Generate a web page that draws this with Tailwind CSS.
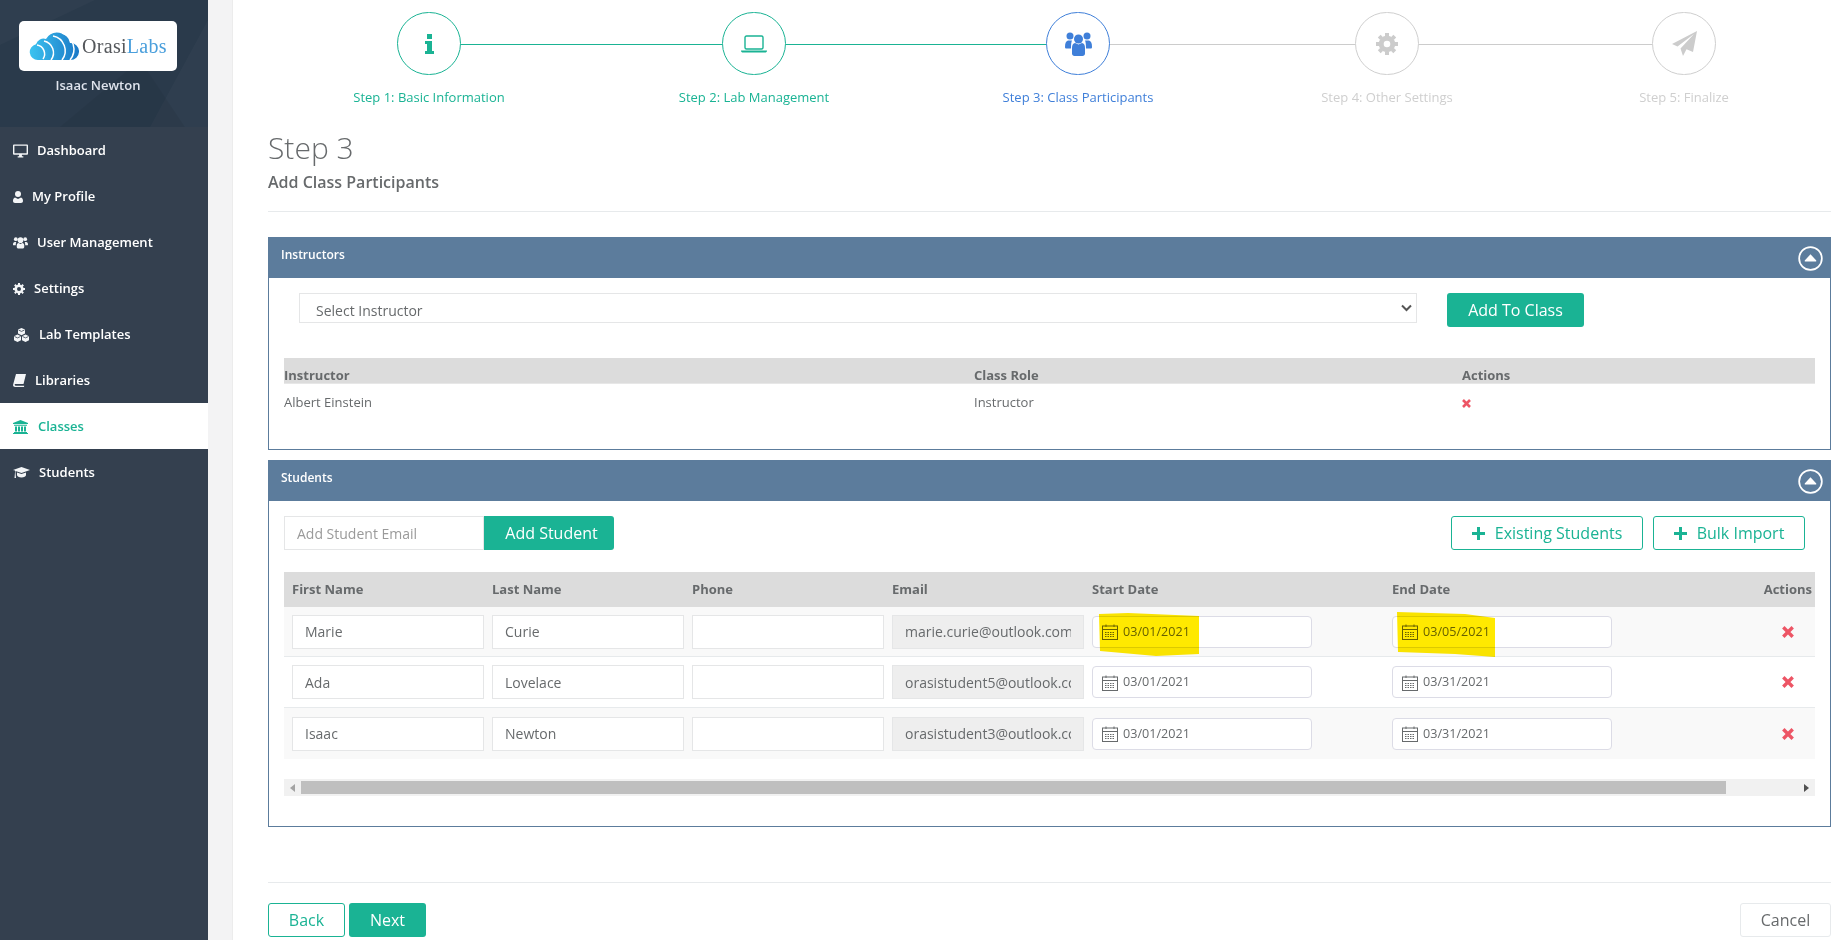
<!DOCTYPE html>
<html lang="en">
<head>
    <meta charset="UTF-8">
    <title>Add Class Participants</title>
    <script src="https://cdn.jsdelivr.net/npm/@tailwindcss/browser@4"></script>
</head>
<body class="bg-white font-['Open_Sans',sans-serif] text-[13px] text-[#676a6c]">
<div class="flex h-[940px] w-[1831px] overflow-hidden">

    <!-- Sidebar -->
    <aside class="w-[208px] shrink-0 bg-[#34404f] text-white">
        <div class="relative h-[127px] overflow-hidden bg-[#2a3a4b] pt-[21px]">
            <svg class="absolute inset-0 h-[127px] w-[208px]" viewBox="0 0 208 127"><path fill="#fff" fill-opacity=".025" d="M0 0h95L0 45zM208 20 150 127h58z"/><path fill="#000" fill-opacity=".05" d="M60 127 140 60l45 67z"/></svg>
            <div class="relative ml-[19px] flex h-[50px] w-[158px] items-center rounded-[5px] bg-white pl-[10px]">
                <svg class="h-[30px] w-[50px] shrink-0" viewBox="0 0 50 30">
                    <defs><linearGradient id="cloud" x1="0" x2="1" y1="0" y2="0"><stop offset="0" stop-color="#3cc3f0"/><stop offset="1" stop-color="#1a78c6"/></linearGradient></defs>
                    <path fill="url(#cloud)" d="M9 29a8 8 0 0 1-2-15.800A8 8 0 0 1 17 8a13 13 0 0 1 24 4 8.500 8.500 0 0 1 9 9 8.500 8.500 0 0 1-8.500 8z"/>
                    <path fill="none" stroke="#fff" stroke-width="1.500" d="M8 14a9 9 0 0 1 6 14M15 10a12 12 0 0 1 7 19M24 5a15 15 0 0 1 9 24M33 2a17 17 0 0 1 8 27"/>
                </svg>
                <span class="ml-[3px] font-['Liberation_Serif',serif] text-[20px] leading-none tracking-[0.3px]"><span class="text-[#55585c]">Orasi</span><span class="text-[#4a9fdc]">Labs</span></span>
            </div>
            <div class="relative mt-[5px] w-[196px] text-center text-[13px] leading-[18px] font-semibold text-[#dfe4ed]">Isaac Newton</div>
        </div>
        <nav class="text-[13px] font-semibold">
            <a class="flex h-[46px] items-center pt-[1px] pl-[13px]">
                <svg class="mr-[9px] h-[14px] w-[15px]" viewBox="0 0 16 14" fill="#f3f5f7"><path d="M1 0h14a1 1 0 0 1 1 1v9a1 1 0 0 1-1 1H9.500v1.500H11V14H5v-1.500h1.500V11H1a1 1 0 0 1-1-1V1a1 1 0 0 1 1-1zm.5 1.500v8h13v-8z"/></svg>Dashboard</a>
            <a class="flex h-[46px] items-center pt-[1px] pl-[13px]">
                <svg class="mr-[9px] h-[12px] w-[10px]" viewBox="0 0 10 12" fill="#f3f5f7"><circle cx="5" cy="3" r="3"/><path d="M2 6.500 5 8l3-1.500c1.300.3 2 1.700 2 3.500 0 1.300-.8 2-2 2H2c-1.200 0-2-.7-2-2 0-1.800.7-3.200 2-3.500z"/></svg>My Profile</a>
            <a class="flex h-[46px] items-center pt-[1px] pl-[13px]">
                <svg class="mr-[9px] h-[13px] w-[15px]" viewBox="0 0 16 13" fill="#f3f5f7"><circle cx="3" cy="3" r="2"/><circle cx="13" cy="3" r="2"/><circle cx="8" cy="4" r="3"/><path d="M0 9c0-2 .6-3 2-3h1.500C3 7 3 8 3 9.500H1C.4 9.500 0 9.500 0 9zM16 9c0-2-.6-3-2-3h-1.500c.5 1 .5 2 .5 3.500h2c.6 0 1-.000 1-.500zM4 9.500C4 8 4.800 7 6 7l2 1 2-1c1.200 0 2 1 2 2.500V11c0 1-.7 2-2 2H6c-1.300 0-2-1-2-2z"/></svg>User Management</a>
            <a class="flex h-[46px] items-center pt-[1px] pl-[13px]">
                <svg class="mr-[9px] h-[12px] w-[12px]" viewBox="0 0 12 12"><circle cx="6" cy="6" r="3.300" fill="none" stroke="#f3f5f7" stroke-width="2.600"/><path stroke="#f3f5f7" stroke-width="2" d="M6 0v12M0 6h12M1.800 1.800l8.400 8.400M10.200 1.800l-8.400 8.400" stroke-dasharray="2 8"/></svg>Settings</a>
            <a class="flex h-[46px] items-center pt-[1px] pl-[13px]">
                <svg class="mr-[9px] h-[14px] w-[17px]" viewBox="0 0 17 14"><g fill="#f3f5f7"><path d="M8.500 0 12 1.600v4L8.500 7.200 5 5.600v-4zM4.500 6.600 8 8.200v4L4.500 14 1 12.200v-4zM12.500 6.600 16 8.200v4L12.500 14 9 12.200v-4z"/></g><path fill="none" stroke="#34404f" stroke-width=".8" d="M5.500 2l3 1.400 3-1.400M1.500 8.500l3 1.400 3-1.400M9.500 8.500l3 1.400 3-1.400"/></svg>Lab Templates</a>
            <a class="flex h-[46px] items-center pt-[1px] pl-[13px]">
                <svg class="mr-[9px] h-[13px] w-[13px]" viewBox="0 0 13 13" fill="#f3f5f7"><path d="M3 0h10L10.500 10H2.500C1.800 10 1.500 10.500 1.700 11s.5.700 1 .700h8.500L11 13H2C1 13 0 12 0 11z"/></svg>Libraries</a>
            <a class="flex h-[46px] items-center bg-white pt-[1px] pl-[13px] text-[#1ab394]">
                <svg class="mr-[10px] h-[14px] w-[15px]" viewBox="0 0 15 14" fill="#1ab394"><path d="M7.500 0 15 3v1H0V3zM1 4.800h13v1H1zM2 6.500h2v5H2zM5 6.500h2v5H5zM8 6.500h2v5H8zM11 6.500h2v5h-2zM1 12h13v1H1zM0 13h15v1H0z"/></svg>Classes</a>
            <a class="flex h-[46px] items-center pt-[1px] pl-[13px]">
                <svg class="mr-[9px] h-[12px] w-[17px]" viewBox="0 0 17 12" fill="#f3f5f7"><path d="M8.500 0 17 3 8.500 6 2.500 3.900V5.500l.5 5.500H1.500L2 5.500V3.500L0 3z"/><path d="M4 5.500 8.500 7 13 5.500V8c0 1.500-2 2.500-4.500 2.500S4 9.500 4 8z"/></svg>Students</a>
        </nav>
    </aside>

    <!-- Gutter -->
    <div class="w-[25px] shrink-0 border-r border-[#ececec] bg-[#f3f3f4]"></div>

    <!-- Main -->
    <main class="min-w-0 flex-1">
        <!-- Steps -->
        <div class="flex h-[113px] items-start pl-[164px] pt-[12px]">
            <div class="flex w-[64px] shrink-0 flex-col items-center text-[#1ab394]">
                <div class="flex h-[63px] w-[64px] items-center justify-center rounded-full border border-[#1ab394]">
                    <svg class="h-[20px] w-[9px]" viewBox="0 0 9 20" fill="#1ab394"><rect x="2" width="5" height="5"/><path d="M0 7h7v10h2v3H0v-3h2v-7H0z"/></svg>
                </div>
                <span class="mt-[13px] text-[13px] leading-[18px] whitespace-nowrap">Step 1: Basic Information</span>
            </div>
            <div class="mt-[32px] h-[1px] w-[261px] shrink-0 bg-[#1ab394]"></div>
            <div class="flex w-[64px] shrink-0 flex-col items-center text-[#1ab394]">
                <div class="flex h-[63px] w-[64px] items-center justify-center rounded-full border border-[#1ab394]">
                    <svg class="h-[18px] w-[26px]" viewBox="0 0 26 18"><rect x="4" y="1" width="18" height="13" rx="1.500" fill="none" stroke="#1ab394" stroke-width="1.400"/><path fill="#1ab394" d="M0 15.500h26c0 1.500-.8 2-2 2H2c-1.200 0-2-.5-2-2z"/></svg>
                </div>
                <span class="mt-[13px] text-[13px] leading-[18px] whitespace-nowrap">Step 2: Lab Management</span>
            </div>
            <div class="mt-[32px] h-[1px] w-[260px] shrink-0 bg-[#1ab394]"></div>
            <div class="flex w-[64px] shrink-0 flex-col items-center text-[#3f7fd9]">
                <div class="flex h-[63px] w-[64px] items-center justify-center rounded-full border border-[#3f7fd9]">
                    <svg class="h-[24px] w-[27px]" viewBox="0 0 27 24" fill="#3f7fd9"><circle cx="5" cy="4" r="3.500"/><circle cx="22" cy="4" r="3.500"/><circle cx="13.500" cy="7" r="4.500"/><path d="M0 15c0-4 1-6 3-6.500h4c-.7 1.500-1 3.500-1 8H1.500C.5 16.500 0 16 0 15zM27 15c0-4-1-6-3-6.500h-4c.7 1.500 1 3.500 1 8h4.500c1 0 1.500-.5 1.500-1.500zM7 16c0-3 1-4.500 3-5l3.500 1.500L17 11c2 .5 3 2 3 5v5.500c0 1.500-1 2.500-2.500 2.500h-8C8 24 7 23 7 21.500z"/></svg>
                </div>
                <span class="mt-[13px] text-[13px] leading-[18px] whitespace-nowrap">Step 3: Class Participants</span>
            </div>
            <div class="mt-[32px] h-[1px] w-[245px] shrink-0 bg-[#cccccc]"></div>
            <div class="flex w-[64px] shrink-0 flex-col items-center text-[#cfcfcf]">
                <div class="flex h-[63px] w-[64px] items-center justify-center rounded-full border border-[#cfcfcf]">
                    <svg class="h-[22px] w-[22px]" viewBox="0 0 22 22"><circle cx="11" cy="11" r="5.800" fill="none" stroke="#cccccc" stroke-width="5"/><path stroke="#cccccc" stroke-width="4" d="M11 0v22M0 11h22M3.200 3.200l15.600 15.600M18.800 3.200 3.200 18.800" stroke-dasharray="3.500 15"/></svg>
                </div>
                <span class="mt-[13px] text-[13px] leading-[18px] whitespace-nowrap">Step 4: Other Settings</span>
            </div>
            <div class="mt-[32px] h-[1px] w-[233px] shrink-0 bg-[#cccccc]"></div>
            <div class="flex w-[64px] shrink-0 flex-col items-center text-[#cfcfcf]">
                <div class="flex h-[63px] w-[64px] items-center justify-center rounded-full border border-[#cfcfcf]">
                    <svg class="h-[25px] w-[25px]" viewBox="0 0 25 25" fill="#cccccc"><path d="M25 0 21 21l-6.500-2.700L11 25l-2.500-7.500L22 3 5.500 15.500 0 13z"/></svg>
                </div>
                <span class="mt-[13px] text-[13px] leading-[18px] whitespace-nowrap">Step 5: Finalize</span>
            </div>
        </div>

        <!-- Title -->
        <div class="ml-[35px] h-[99px] border-b border-[#e7eaec] pt-[17px]">
            <h2 class="text-[30px] leading-[36px] font-light text-[#676a6c]">Step 3</h2>
            <h3 class="mt-[6px] text-[16px] leading-[20px] font-semibold text-[#676a6c]">Add Class Participants</h3>
        </div>

        <!-- Instructors panel -->
        <section class="mt-[25px] ml-[35px] h-[213px] border border-[#5c7c9c]">
            <div class="flex h-[40px] items-center justify-between bg-[#5c7c9c] pr-[7px] pl-[12px] text-[12px] font-semibold text-white">
                <span class="pb-[7px]">Instructors</span>
                <svg class="h-[25px] w-[25px]" viewBox="0 0 26 26"><circle cx="13" cy="13" r="11.800" fill="none" stroke="#fff" stroke-width="1.800"/><path fill="#fff" d="M13 8.500 19 15a.700.700 0 0 1-.500 1h-11a.700.700 0 0 1-.500-1z"/></svg>
            </div>
            <div class="flex items-start pt-[15px] pl-[30px]">
                <select class="h-[30px] w-[1118px] appearance-none border border-[#e5e6e7] pt-[4px] pl-[16px] text-[14px] text-[#676a6c]"><option>Select Instructor</option></select>
                <svg class="mt-[11px] -ml-[16px] h-[8px] w-[11px]" viewBox="0 0 11 8"><path fill="none" stroke="#555" stroke-width="2" d="m1 1.500 4.500 4.500L10 1.500"/></svg>
                <button class="ml-[35px] h-[34px] w-[137px] rounded-[3px] bg-[#1ab394] text-[16px] text-white">Add To Class</button>
            </div>
            <div class="mt-[31px] mr-[15px] ml-[15px]">
                <div class="flex h-[26px] items-end border-b border-[#e7e7e7] bg-[#dcdcdc] text-[13px] leading-[16px] font-bold">
                    <span class="w-[690px]">Instructor</span><span class="w-[488px]">Class Role</span><span>Actions</span>
                </div>
                <div class="flex h-[36px] items-center pt-[2px] text-[13px]">
                    <span class="w-[690px]">Albert Einstein</span><span class="w-[488px]">Instructor</span>
                    <svg class="h-[9px] w-[9px]" viewBox="0 0 9 9"><path stroke="#ed5565" stroke-width="2.600" d="m1 1 7 7M8 1 1 8"/></svg>
                </div>
            </div>
        </section>

        <!-- Students panel -->
        <section class="mt-[10px] ml-[35px] h-[367px] border border-[#5c7c9c]">
            <div class="flex h-[40px] items-center justify-between bg-[#5c7c9c] pr-[7px] pl-[12px] text-[12px] font-semibold text-white">
                <span class="pb-[7px]">Students</span>
                <svg class="h-[25px] w-[25px]" viewBox="0 0 26 26"><circle cx="13" cy="13" r="11.800" fill="none" stroke="#fff" stroke-width="1.800"/><path fill="#fff" d="M13 8.500 19 15a.700.700 0 0 1-.500 1h-11a.700.700 0 0 1-.500-1z"/></svg>
            </div>
            <div class="flex items-center pt-[15px] pr-[25px] pl-[15px]">
                <input class="h-[34px] w-[200px] border border-[#e5e6e7] px-[12px] text-[14px] placeholder:text-[#9a9a9a]" placeholder="Add Student Email">
                <button class="h-[34px] w-[130px] rounded-r-[3px] bg-[#1ab394] pl-[5px] text-[16px] text-white">Add Student</button>
                <button class="ml-auto flex h-[34px] w-[192px] items-center justify-center rounded-[3px] border border-[#1ab394] text-[16px] text-[#1ab394]">
                    <svg class="mr-[10px] h-[13px] w-[13px]" viewBox="0 0 13 13" fill="#1ab394"><path d="M5 0h3v5h5v3H8v5H5V8H0V5h5z"/></svg>Existing Students</button>
                <button class="ml-[10px] flex h-[34px] w-[152px] items-center justify-center rounded-[3px] border border-[#1ab394] text-[16px] text-[#1ab394]">
                    <svg class="mr-[10px] h-[13px] w-[13px]" viewBox="0 0 13 13" fill="#1ab394"><path d="M5 0h3v5h5v3H8v5H5V8H0V5h5z"/></svg>Bulk Import</button>
            </div>
            <div class="mt-[22px] mr-[15px] ml-[15px]">
                <div class="flex h-[35px] items-center bg-[#dcdcdc] pl-[8px] text-[13px] font-bold">
                    <span class="w-[200px]">First Name</span><span class="w-[200px]">Last Name</span><span class="w-[200px]">Phone</span><span class="w-[200px]">Email</span><span class="w-[300px]">Start Date</span><span class="w-[300px]">End Date</span><span class="ml-auto pr-[3px]">Actions</span>
                </div>

                <!-- Marie Curie -->
                <div class="flex h-[50px] items-center border-b border-[#e7eaec] bg-[#f9f9f9] pl-[8px]">
                    <input class="mr-[8px] h-[34px] w-[192px] border border-[#e5e6e7] bg-white px-[12px] text-[14px]" value="Marie">
                    <input class="mr-[8px] h-[34px] w-[192px] border border-[#e5e6e7] bg-white px-[12px] text-[14px]" value="Curie">
                    <input class="mr-[8px] h-[34px] w-[192px] border border-[#e5e6e7] bg-white px-[12px] text-[14px]">
                    <input class="mr-[8px] h-[34px] w-[192px] border border-[#e5e6e7] bg-[#eeeeee] px-[12px] text-[14px]" value="marie.curie@outlook.com">
                    <div class="relative mr-[80px] flex h-[32px] w-[220px] items-center rounded-[4px] border border-[#dcdce6] bg-white pt-[1px] pl-[9px] text-[12.6px]">
                        <svg class="mr-[5px] h-[16px] w-[16px]" viewBox="0 0 16 16" fill="none" stroke="#676a6c"><rect x=".5" y="2" width="15" height="13.500"/><path d="M.5 5.500h15M4 .5V3M12 .5V3" /><path stroke-dasharray="1.500 1" d="M3 8.500h10M3 10.500h10M3 12.500h10"/></svg>03/01/2021
                        <!-- marker stroke -->
                        <svg class="absolute top-[-4px] left-[5px] h-[44px] w-[102px] mix-blend-multiply" viewBox="0 0 102 44"><path fill="#ffe900" d="M1 1 30 0l71 3v38l-43 2-56-5z"/></svg>
                    </div>
                    <div class="relative flex h-[32px] w-[220px] items-center rounded-[4px] border border-[#dcdce6] bg-white pt-[1px] pl-[9px] text-[12.6px]">
                        <svg class="mr-[5px] h-[16px] w-[16px]" viewBox="0 0 16 16" fill="none" stroke="#676a6c"><rect x=".5" y="2" width="15" height="13.500"/><path d="M.5 5.500h15M4 .5V3M12 .5V3" /><path stroke-dasharray="1.500 1" d="M3 8.500h10M3 10.500h10M3 12.500h10"/></svg>03/05/2021
                        <svg class="absolute top-[-5px] left-[3px] h-[45px] w-[100px] mix-blend-multiply" viewBox="0 0 100 45"><path fill="#ffe900" d="M1 0l68 2 30 4v39l-40-3-57-2z"/></svg>
                    </div>
                    <svg class="ml-[170px] h-[12px] w-[12px]" viewBox="0 0 12 12"><path stroke="#ed5565" stroke-width="3.400" d="m1.300 1.300 9.400 9.400M10.700 1.300l-9.400 9.400"/></svg>
                </div>

                <!-- Ada Lovelace -->
                <div class="flex h-[51px] items-center border-b border-[#e7eaec] bg-white pl-[8px]">
                    <input class="mr-[8px] h-[34px] w-[192px] border border-[#e5e6e7] bg-white px-[12px] text-[14px]" value="Ada">
                    <input class="mr-[8px] h-[34px] w-[192px] border border-[#e5e6e7] bg-white px-[12px] text-[14px]" value="Lovelace">
                    <input class="mr-[8px] h-[34px] w-[192px] border border-[#e5e6e7] bg-white px-[12px] text-[14px]">
                    <input class="mr-[8px] h-[34px] w-[192px] border border-[#e5e6e7] bg-[#eeeeee] px-[12px] text-[14px]" value="orasistudent5@outlook.com">
                    <div class="mr-[80px] flex h-[32px] w-[220px] items-center rounded-[4px] border border-[#dcdce6] bg-white pt-[1px] pl-[9px] text-[12.6px]">
                        <svg class="mr-[5px] h-[16px] w-[16px]" viewBox="0 0 16 16" fill="none" stroke="#676a6c"><rect x=".5" y="2" width="15" height="13.500"/><path d="M.5 5.500h15M4 .5V3M12 .5V3" /><path stroke-dasharray="1.500 1" d="M3 8.500h10M3 10.500h10M3 12.500h10"/></svg>03/01/2021
                    </div>
                    <div class="flex h-[32px] w-[220px] items-center rounded-[4px] border border-[#dcdce6] bg-white pt-[1px] pl-[9px] text-[12.6px]">
                        <svg class="mr-[5px] h-[16px] w-[16px]" viewBox="0 0 16 16" fill="none" stroke="#676a6c"><rect x=".5" y="2" width="15" height="13.500"/><path d="M.5 5.500h15M4 .5V3M12 .5V3" /><path stroke-dasharray="1.500 1" d="M3 8.500h10M3 10.500h10M3 12.500h10"/></svg>03/31/2021
                    </div>
                    <svg class="ml-[170px] h-[12px] w-[12px]" viewBox="0 0 12 12"><path stroke="#ed5565" stroke-width="3.400" d="m1.300 1.300 9.400 9.400M10.700 1.300l-9.400 9.400"/></svg>
                </div>

                <!-- Isaac Newton -->
                <div class="flex h-[51px] items-center bg-[#f9f9f9] pl-[8px]">
                    <input class="mr-[8px] h-[34px] w-[192px] border border-[#e5e6e7] bg-white px-[12px] text-[14px]" value="Isaac">
                    <input class="mr-[8px] h-[34px] w-[192px] border border-[#e5e6e7] bg-white px-[12px] text-[14px]" value="Newton">
                    <input class="mr-[8px] h-[34px] w-[192px] border border-[#e5e6e7] bg-white px-[12px] text-[14px]">
                    <input class="mr-[8px] h-[34px] w-[192px] border border-[#e5e6e7] bg-[#eeeeee] px-[12px] text-[14px]" value="orasistudent3@outlook.com">
                    <div class="mr-[80px] flex h-[32px] w-[220px] items-center rounded-[4px] border border-[#dcdce6] bg-white pt-[1px] pl-[9px] text-[12.6px]">
                        <svg class="mr-[5px] h-[16px] w-[16px]" viewBox="0 0 16 16" fill="none" stroke="#676a6c"><rect x=".5" y="2" width="15" height="13.500"/><path d="M.5 5.500h15M4 .5V3M12 .5V3" /><path stroke-dasharray="1.500 1" d="M3 8.500h10M3 10.500h10M3 12.500h10"/></svg>03/01/2021
                    </div>
                    <div class="flex h-[32px] w-[220px] items-center rounded-[4px] border border-[#dcdce6] bg-white pt-[1px] pl-[9px] text-[12.6px]">
                        <svg class="mr-[5px] h-[16px] w-[16px]" viewBox="0 0 16 16" fill="none" stroke="#676a6c"><rect x=".5" y="2" width="15" height="13.500"/><path d="M.5 5.500h15M4 .5V3M12 .5V3" /><path stroke-dasharray="1.500 1" d="M3 8.500h10M3 10.500h10M3 12.500h10"/></svg>03/31/2021
                    </div>
                    <svg class="ml-[170px] h-[12px] w-[12px]" viewBox="0 0 12 12"><path stroke="#ed5565" stroke-width="3.400" d="m1.300 1.300 9.400 9.400M10.700 1.300l-9.400 9.400"/></svg>
                </div>

                <!-- Scrollbar -->
                <div class="mt-[20px] flex h-[17px] items-center bg-[#f1f1f1]">
                    <svg class="ml-[6px] h-[8px] w-[5px]" viewBox="0 0 5 8" fill="#a3a3a3"><path d="M5 0v8L0 4z"/></svg>
                    <div class="ml-[6px] h-[13px] w-[1425px] bg-[#bfbfbf]"></div>
                    <svg class="ml-auto mr-[6px] h-[8px] w-[5px]" viewBox="0 0 5 8" fill="#505050"><path d="M0 0v8l5-4z"/></svg>
                </div>
            </div>
        </section>

        <!-- Footer -->
        <div class="mt-[55px] ml-[35px] flex items-start border-t border-[#e7eaec] pt-[20px]">
            <button class="h-[34px] w-[77px] rounded-[3px] border border-[#1ab394] text-[16px] text-[#1ab394]">Back</button>
            <button class="ml-[4px] h-[34px] w-[77px] rounded-[3px] bg-[#1ab394] text-[16px] text-white">Next</button>
            <button class="ml-auto h-[34px] w-[91px] rounded-[3px] border border-[#e7eaec] text-[16px] text-[#676a6c]">Cancel</button>
        </div>
    </main>
</div>
</body>
</html>
